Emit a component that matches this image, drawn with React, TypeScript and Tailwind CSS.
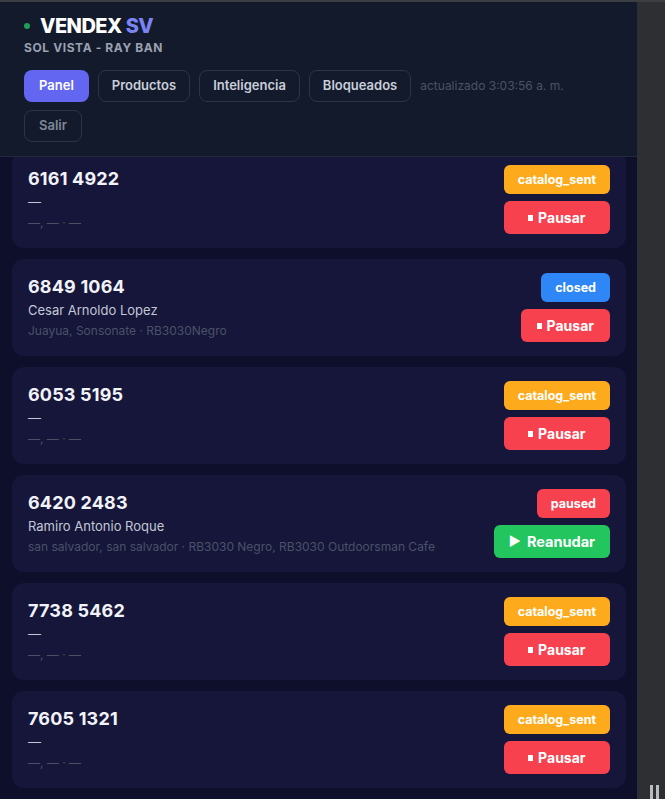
import React from "react"

type Lead = {
  phone: string
  name: string
  place: string
  status: "catalog_sent" | "closed" | "paused"
  paused?: boolean
}

const leads: Lead[] = [
  { phone: "6161 4922", name: "—", place: "—, — · —", status: "catalog_sent" },
  { phone: "6849 1064", name: "Cesar Arnoldo Lopez", place: "Juayua, Sonsonate · RB3030Negro", status: "closed" },
  { phone: "6053 5195", name: "—", place: "—, — · —", status: "catalog_sent" },
  {
    phone: "6420 2483",
    name: "Ramiro Antonio Roque",
    place: "san salvador, san salvador · RB3030 Negro, RB3030 Outdoorsman Cafe",
    status: "paused",
    paused: true,
  },
  { phone: "7738 5462", name: "—", place: "—, — · —", status: "catalog_sent" },
  { phone: "7605 1321", name: "—", place: "—, — · —", status: "catalog_sent" },
]

const badgeColor: Record<Lead["status"], string> = {
  catalog_sent: "bg-[#fdab1d]",
  closed: "bg-[#2f87f7]",
  paused: "bg-[#f8414f]",
}

function LeadCard({ lead, first }: { lead: Lead; first?: boolean }) {
  return (
    <div
      className={`flex items-center justify-between rounded-xl bg-[#15163a] px-4 py-[14px] ${
        first ? "-mt-[6px]" : ""
      }`}
    >
      <div className="flex flex-col">
        <span className="text-[18px] font-bold leading-6 tracking-[0.01em] text-[#f1f3f9]">{lead.phone}</span>
        <span className="mt-[1px] text-[13px] leading-5 text-[#c3c8d6]">{lead.name}</span>
        <span className="mt-[2px] text-[12px] leading-[18px] text-[#4a5268]">{lead.place}</span>
      </div>
      <div className="flex flex-col gap-[7px]">
        <span
          className={`self-end rounded-md px-[14px] text-[12.5px] font-bold leading-[29px] text-white ${badgeColor[lead.status]}`}
        >
          {lead.status}
        </span>
        {lead.paused ? (
          <button className="flex h-[33px] items-center justify-center gap-1.5 rounded-md bg-[#22c55e] px-[15px] text-[14.5px] font-bold text-white">
            <span className="text-[13px]">▶</span>
            Reanudar
          </button>
        ) : (
          <button className="flex h-[33px] items-center justify-center gap-[5px] rounded-md bg-[#f8414f] px-4 text-[14px] font-bold text-white">
            <span className="inline-block h-[6px] w-[5px] bg-white" />
            Pausar
          </button>
        )}
      </div>
    </div>
  )
}

export default function App() {
  return (
    <div className="flex h-screen w-full overflow-hidden border-t-2 border-[#3b3e42] bg-[#2d2f32] font-['Inter',sans-serif]">
      <div className="flex w-[637px] flex-col bg-[#0e102b]">
        {/* Header */}
        <header className="relative z-10 border-b border-[#24283d] bg-[#131a2b] px-6 pb-[14px] pt-[10px]">
          <div className="flex items-center gap-[10px]">
            <span className="h-[6px] w-[6px] rounded-full bg-[#1f9d57]" />
            <h1 className="text-[20px] font-extrabold leading-7 tracking-tight text-white">
              VENDEX <span className="text-[#7b84f5]">SV</span>
            </h1>
          </div>
          <div className="text-[12px] font-bold leading-4 tracking-wider text-[#9aa1b1]">SOL VISTA - RAY BAN</div>
          <div className="mt-[14px] flex flex-wrap items-center gap-x-[9px] gap-y-2">
            <button className="h-8 rounded-lg bg-[#6366f1] px-[15px] text-[13px] font-semibold text-white">Panel</button>
            <button className="h-8 rounded-lg border border-[#2c3446] px-[13px] text-[13px] font-semibold text-[#c9ceda]">
              Productos
            </button>
            <button className="h-8 rounded-lg border border-[#2c3446] px-[13px] text-[13px] font-semibold text-[#c9ceda]">
              Inteligencia
            </button>
            <button className="h-8 rounded-lg border border-[#2c3446] px-[13px] text-[13px] font-semibold text-[#c9ceda]">
              Bloqueados
            </button>
            <span className="text-[12px] text-[#4b5366]">actualizado 3:03:56 a. m.</span>
            <button className="h-8 rounded-lg border border-[#2c3446] px-[14px] text-[13px] font-semibold text-[#7f8798]">
              Salir
            </button>
          </div>
        </header>

        {/* List */}
        <div className="flex flex-col gap-[11px] overflow-hidden pl-3 pr-[11px]">
          {leads.map((lead, i) => (
            <LeadCard key={lead.phone} lead={lead} first={i === 0} />
          ))}
        </div>
      </div>
      <div className="flex flex-1 items-end justify-end gap-[3px] pr-[6px]">
        <span className="h-[14px] w-[3px] bg-[#b9bcc0]" />
        <span className="h-[14px] w-[3px] bg-[#b9bcc0]" />
      </div>
    </div>
  )
}
